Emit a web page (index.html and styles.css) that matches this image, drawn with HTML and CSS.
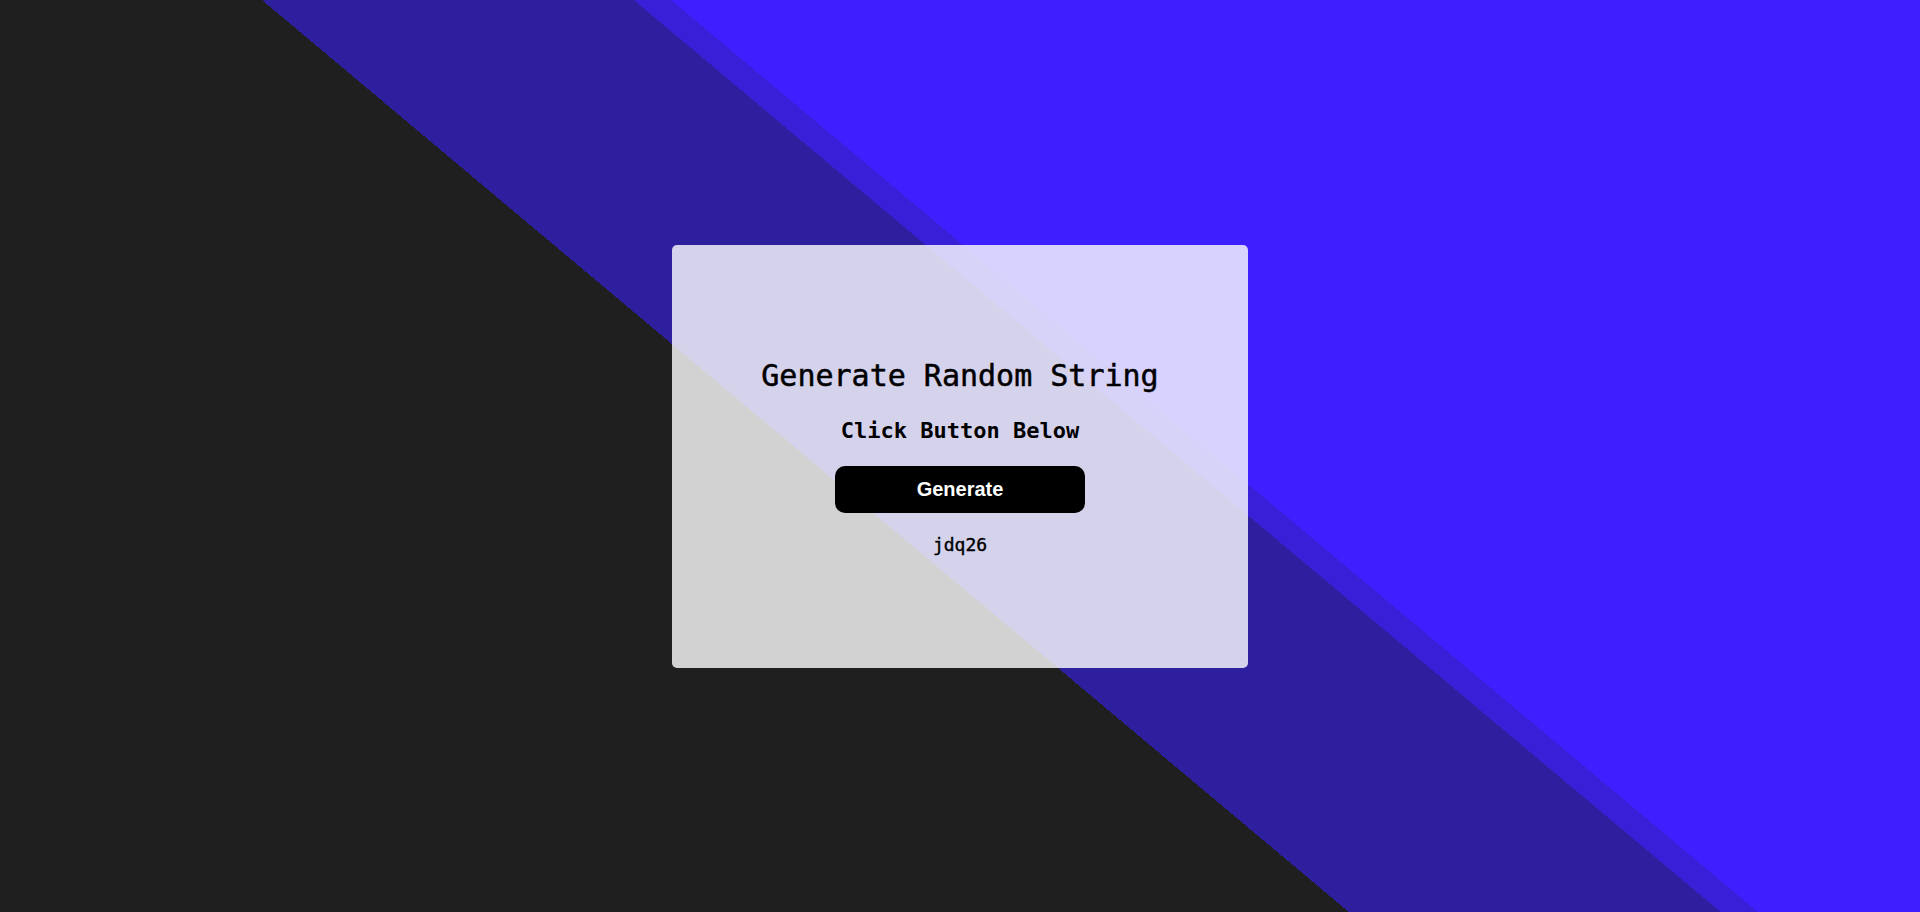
FILE: index.html
```html
<!DOCTYPE html>
<html lang="en">
<head>
<meta charset="utf-8">
<title>Generate Random String</title>
<link rel="stylesheet" href="styles.css">
</head>
<body>
<main class="page">
  <section class="card">
    <h1 class="title">Generate Random String</h1>
    <h2 class="subtitle">Click Button Below</h2>
    <button class="btn" type="button">Generate</button>
    <p class="result">jdq26</p>
  </section>
</main>
</body>
</html>
```

FILE: styles.css
```css
html, body {
  margin: 0;
  padding: 0;
}

body {
  width: 100vw;
  height: 100vh;
  overflow: hidden;
  background: linear-gradient(40deg,
    #1f1f1f 0px, #1f1f1f 867px,
    #2e1f9f 867px, #2e1f9f 1106px,
    #3820d8 1106px, #3820d8 1130px,
    #3d1fff 1130px, #3d1fff 100%);
  font-family: "DejaVu Sans Mono", "Liberation Mono", monospace;
}

.page {
  width: 100%;
  height: 100%;
  display: flex;
  align-items: center;
  justify-content: center;
}

.card {
  width: 576px;
  height: 423px;
  box-sizing: border-box;
  background: rgba(255, 255, 255, 0.8);
  border-radius: 5px;
  display: flex;
  flex-direction: column;
  align-items: center;
  justify-content: center;
  padding-top: 2px;
}

.title {
  margin: 0;
  font-size: 30px;
  line-height: 36px;
  font-weight: normal;
  color: #000;
  -webkit-text-stroke: 0.5px #000;
}

.subtitle {
  margin: 24px 0 0;
  font-size: 22px;
  line-height: 26px;
  font-weight: bold;
  color: #000;
}

.btn {
  margin-top: 22px;
  width: 250px;
  height: 47px;
  border: none;
  border-radius: 10px;
  background: #000;
  color: #fff;
  font-family: "Liberation Sans", Arial, sans-serif;
  font-weight: bold;
  font-size: 20px;
  padding: 0;
}

.result {
  margin: 21px 0 0;
  font-size: 18px;
  line-height: 22px;
  color: #000;
  -webkit-text-stroke: 0.4px #000;
}
```
